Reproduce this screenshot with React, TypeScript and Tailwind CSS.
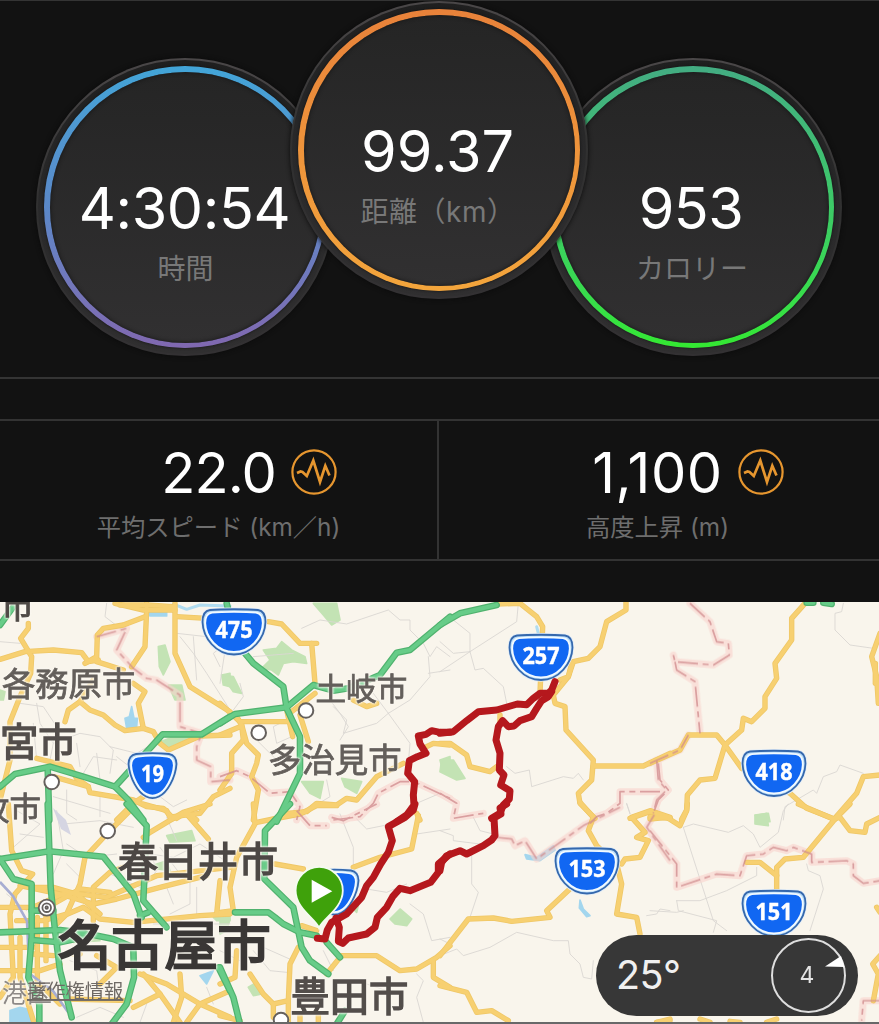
import React from "react";

type Layer = "minor" | "park" | "water" | "river" | "border" | "yellow" | "green" | "route";
type Tile = { x: number; y: number } & Partial<Record<Layer, string[]>>;

// Map geometry, split in tiles. Points are in thirds of a pixel from the tile origin.
const tiles: Tile[] = [
  {
    x: 0,
    y: 600,
    green: ["0,560 45,522 150,500 250,530 345,560 385,600 430,660", "345,560 488,403 605,403 690,350", "143,505 148,660", "0,75 40,20"],
    yellow: [
      "0,178 75,155 160,150 245,158 265,185 295,180",
      "255,190 290,170 292,105 310,85 370,75 435,50",
      "85,70 85,85 62,115 95,170 92,220 60,290 30,365 30,480 0,600",
      "440,10 440,30 435,140 395,200",
      "345,10 430,30 525,30",
      "360,15 440,15 520,20",
      "525,10 525,160 570,260 690,335",
      "530,50 620,55",
      "290,185 370,210",
      "400,250 435,275 415,310 430,385",
      "195,365 205,330 240,305 270,330 310,345 345,375 375,392 430,385 460,395 480,430 505,450 600,408 690,405",
      "240,305 280,240",
      "110,475 210,500 230,535 265,560 270,578 400,600 440,620 490,625 520,655",
      "160,530 265,560",
      "350,660 400,610 430,590",
      "520,650 600,640 640,590 690,565",
      "530,655 560,635 590,660",
    ],
    border: ["290,110 380,85 350,150 400,205 440,235 470,240 540,285 540,380 605,400 590,440 590,480 632,500 632,545 690,540"],
    park: ["475,140 495,135 510,185 490,225 478,200", "505,255 545,255 555,300 525,300", "665,225 690,220 690,260 670,255", "470,430 520,410 570,412 500,442", "0,270 15,275 10,300 0,300"],
    water: ["395,320 402,355 412,355 410,380 380,385 375,355 388,350", "445,35 500,35 500,48 450,48"],
    river: ["520,12 560,28 600,15 690,18"],
    minor: ["320,10 315,50 380,100", "0,125 60,130", "530,100 620,110 690,90", "540,110 580,160 620,220 690,330", "580,110 590,240", "110,310 120,370 160,430 240,400 300,410 340,450 330,520", "230,430 240,500", "330,440 410,460 460,430", "290,460 300,540", "350,470 440,540", "100,370 110,480", "200,570 200,640 230,660", "300,590 300,650", "160,590 330,640", "60,310 130,320 170,380 150,480", "250,520 280,470 350,480", "480,590 520,620 560,600", "690,120 640,160 660,200"],
  },
  {
    x: 220,
    y: 600,
    green: ["0,370 45,342 200,322 280,255 340,272 385,265 480,225 530,158 570,150 690,50", "20,10 30,50 75,160 100,190 190,260 200,325 240,410 240,520 170,665"],
    yellow: [
      "145,65 185,72 240,130 290,130",
      "275,130 285,250",
      "285,280 215,335",
      "240,345 265,425",
      "200,365 60,365 0,310",
      "200,330 218,410",
      "60,380 0,405",
      "50,350 65,375 70,420 35,460 35,520 0,570",
      "65,375 80,430 115,465 110,490 95,530 115,570 100,660",
      "550,490 470,530 410,600 380,595 350,615 290,610 260,635 200,640",
      "400,300 440,320 470,310",
      "620,440 640,430 690,435",
      "590,640 600,660",
    ],
    route: ["690,397 660,397 635,392 618,403 595,408 600,432 618,460 592,470 568,482 563,520 584,545 580,585 582,615 560,645 530,665"],
    border: ["0,530 50,512 90,530 150,580 210,575 240,620 230,660", "340,660 420,650 460,610 475,580 540,545 570,545 582,545 690,595"],
    park: ["280,10 350,10 360,60 335,75 310,45", "130,150 170,145 185,125 215,150 255,170 260,190 220,185 190,190 175,225 155,210 125,205 150,180", "5,225 40,230 65,280 40,275", "660,480 690,470 690,520 665,500", "245,545 310,545 300,595 270,580", "365,535 425,545 410,580 375,560"],
    minor: ["245,85 300,60 380,72 505,30 540,60 570,60 570,90 610,130 630,170 650,140 690,170", "625,170 630,230 570,300 505,340 460,280", "505,340 470,370 370,400 380,360 340,320", "505,340 570,430 565,490", "40,330 70,290 60,250", "100,170 220,160", "200,360 160,380 170,430 215,410", "110,420 190,500", "330,300 360,340 385,380 360,420", "690,210 625,220", "590,610 660,580", "20,120 0,250", "280,620 330,590 320,540"],
  },
  {
    x: 440,
    y: 600,
    green: ["0,75 60,40 170,15"],
    yellow: [
      "170,12 240,10 290,50 308,80 300,280",
      "558,5 558,30 500,65 480,140 445,175 400,185 385,230 340,285 345,310 375,320 378,390 460,480 455,540 415,580 420,610 465,655",
      "460,498 610,498 690,460",
      "0,430 30,430 80,465 90,500 150,515 170,500",
      "180,345 180,365",
      "570,655 630,635 690,655",
      "395,190 385,230 360,240",
    ],
    route: ["0,400 40,395 80,362 115,335 170,330 232,312 260,314 280,295 300,280 325,280 335,270 345,245", "335,275 325,290 305,302 290,325 275,350 240,362 222,378 205,380 188,362 175,380 168,420 180,460 178,510 192,525 182,555 210,572 208,597 190,615 180,640 155,655"],
    border: ["0,580 50,610 40,655 130,640", "655,490 660,540 685,570 655,600 640,640", "660,575 540,575 540,610 500,640 470,650 450,670"],
    park: ["5,480 40,480 75,535 50,540 0,515"],
    river: ["290,80 295,100"],
    minor: ["40,60 90,100 90,155 0,215", "90,155 40,160 0,125", "90,155 105,210 130,205 190,260 200,310", "200,500 225,520 268,510 275,560 370,530 400,535 415,520 430,540", "235,10 230,65 90,155", "560,610 570,640"],
  },
  {
    x: 650,
    y: 600,
    green: ["470,8 490,8", "520,8 545,12"],
    yellow: [
      "465,10 425,55 425,120 375,190 380,235 345,290 345,325 305,365 280,355 275,390 225,435 195,535 150,540 112,585 110,630 95,658",
      "0,490 90,450 115,405 200,405 225,435 275,505 420,580 470,625 555,658",
      "690,525 640,530 620,580 550,660",
      "690,100 665,170 680,230 685,310",
      "676,190 676,250",
      "0,650 60,655",
    ],
    border: ["120,10 180,65 200,125 235,130 238,165 190,195 75,185 70,165", "75,185 80,210 135,245 150,400", "0,490 90,450 115,405", "20,480 25,540 50,570 20,600 10,640"],
    park: ["315,645 355,640 360,665 325,665"],
    minor: ["580,10 575,35 555,40 555,90 600,135 670,145", "400,660 405,620 490,570 500,580 520,530 560,515 570,495 640,520"],
  },
  {
    x: 0,
    y: 804,
    green: [
      "0,165 148,142 310,158 400,270 425,340",
      "143,0 152,250 165,380 180,500 215,640",
      "380,0 440,65 430,290 500,370",
      "0,165 40,225 95,240 95,400 85,520 118,600 118,660",
      "0,385 180,378 240,385 340,405 400,430 402,520 380,600 335,660",
      "95,408 180,415 250,400",
      "420,335 445,325",
      "95,320 160,320",
      "655,490 690,560",
    ],
    yellow: [
      "25,0 35,140 65,200 98,210 45,270 30,330 40,520 0,580",
      "390,20 320,90 255,160 240,240 200,330 170,360",
      "0,310 100,310 200,265 320,280 470,215 560,205 690,190",
      "60,245 180,270 280,300 350,285 480,250 620,215",
      "280,350 280,250 330,205 370,190",
      "90,250 160,250 230,270 300,330",
      "160,300 240,255 330,265",
      "180,340 250,310 300,345 400,355 600,335 690,330",
      "660,230 650,330",
      "430,100 450,85 550,25 630,0",
      "555,25 625,105",
      "430,0 500,20 510,40",
      "0,500 120,500 180,480",
      "0,430 100,430",
      "100,450 160,455",
      "112,340 112,540",
      "138,320 138,470",
      "50,350 130,350 200,330",
      "60,400 60,520 100,650",
      "220,450 240,450",
      "290,455 350,490 300,540",
      "420,510 500,540 600,600 690,640",
      "540,510 545,580 520,655",
      "690,560 600,600 560,655",
      "430,510 480,570 400,610",
      "480,570 540,655",
      "200,585 390,590",
      "120,540 180,600",
    ],
    park: ["500,95 575,80 585,110 510,115", "200,385 270,375 300,410 220,415", "640,340 690,335 690,350 650,350", "440,190 500,170 510,200"],
    water: ["30,620 60,610 95,618 90,655 30,655", "600,515 640,500 620,540"],
    minor: ["170,20 190,140 160,210", "60,90 130,100", "190,60 300,50 400,70", "200,120 260,160 350,150", "330,210 420,250", "500,250 520,300", "570,220 570,300 510,330", "200,180 250,230", "50,20 120,60 40,130", "450,150 520,160 600,120 690,180", "480,130 540,210", "460,360 690,360", "20,270 80,320", "210,470 290,500 300,580", "440,600 420,655", "230,640 300,610 370,640", "590,250 590,330", "500,40 530,110", "620,550 640,600", "450,140 470,200 440,240"],
  },
  {
    x: 220,
    y: 804,
    green: ["210,0 135,80 133,225 220,310 245,430 270,470 325,510", "45,325 145,325 165,340 190,360 240,385 290,395", "320,415 360,460", "350,660 375,620", "0,490 40,580 60,660"],
    yellow: [
      "100,0 105,60 50,160 30,250 40,320 0,325",
      "110,55 160,45 240,30 290,5 350,5",
      "165,180 250,195",
      "400,190 480,160 575,135 595,35",
      "360,455 470,455 540,500 590,495 650,460 690,425",
      "640,470 640,520 690,550",
      "360,460 320,510",
      "235,430 210,480 205,590 160,600 130,570 90,510",
      "205,590 205,655",
      "160,600 160,640",
      "0,540 45,520 50,440",
      "245,365 290,380",
      "0,635 60,650",
      "240,635 240,660",
      "295,635 295,660",
    ],
    route: ["585,0 580,18 555,40 505,68 517,110 505,145 482,180 460,220 440,245 425,280 380,330 335,355 322,378 315,405 292,403", "348,342 358,370 355,412 368,418 385,402 440,390 465,370 472,340 500,310 518,278 540,253 570,260 632,235 655,205 655,180 690,150"],
    border: ["230,20 270,65 320,65", "335,40 370,50 420,25 470,0"],
    park: ["510,345 540,315 575,345 560,365 525,360", "395,310 415,305 410,325", "85,550 110,535 125,570 100,575", "0,330 30,345 20,380 0,390"],
    minor: ["360,30 400,130 400,190", "440,255 500,265 560,240", "570,300 610,330 635,410 690,400", "590,510 610,530 590,580 610,655", "410,45 440,75 540,55", "590,90 690,75", "100,440 150,500 200,505", "130,430 220,470", "310,440 340,500", "440,540 500,560", "0,440 60,470"],
  },
  {
    x: 440,
    y: 804,
    yellow: [
      "420,-5 460,40 445,80 470,125 530,180 545,240 530,330 590,340 600,390",
      "400,245 320,320 330,340 215,352 160,342 85,345 0,455",
      "0,545 80,565 110,625 155,620 205,650",
      "545,180 555,165 600,160 625,110 590,100 615,85 575,40 630,20 690,40",
      "650,655 690,650",
    ],
    route: ["200,0 180,12 183,30 162,42 165,95 155,108 130,125 80,150 60,140 20,155 5,175 0,200"],
    border: ["170,100 215,105 225,125 255,110 290,165 430,65 540,10", "690,170 620,70 650,20"],
    water: ["255,152 290,160 340,125 345,138 300,170 260,165", "420,288 430,315 450,335 440,338 418,312"],
    minor: ["95,150 95,240 115,265 90,340", "0,455 50,435 70,455 150,430 230,385 340,410 385,410 390,450 420,480 430,520 455,525 460,470", "620,335 650,330 660,315 690,320", "0,80 40,95 40,110 120,120", "100,40 120,80 160,90", "0,405 30,420", "560,0 570,30"],
  },
  {
    x: 650,
    y: 804,
    yellow: [
      "112,0 110,20 90,65 50,40 0,45",
      "600,0 555,45 460,160 405,165 380,190 380,255",
      "445,0 550,45 570,40 600,80 645,85 650,60 690,40",
      "290,175 330,175 380,215",
      "690,455 668,480 685,510 670,590",
      "20,655 60,645",
      "150,645 180,655",
      "240,652 270,655",
      "350,655 380,645",
      "680,310 690,325",
    ],
    border: ["0,80 80,180 80,250 200,210 270,215 290,155 340,150 370,130 410,140 430,130 485,150 485,175 590,170 610,180 610,215 640,238 690,230", "690,590 640,590 635,650"],
    park: ["315,35 350,28 355,65 315,60"],
    minor: ["100,70 190,350 230,380", "100,70 130,60 235,85 280,65 310,90 330,130 385,85 400,20 415,0", "80,290 85,320 200,350 190,385", "0,320 80,325 100,320", "80,290 150,290 230,260 320,215 320,190", "470,180 475,200 510,215 520,255 480,380"],
  },
];

function Lines({ layer, color, width, dash, opacity }: { layer: Layer; color: string; width: number; dash?: string; opacity?: number }) {
  return (
    <g fill="none" stroke={color} strokeWidth={width * 3} strokeDasharray={dash} strokeLinejoin="round" strokeLinecap={dash ? "butt" : "round"} opacity={opacity}>
      {tiles.map((t) => (
        <g key={`${t.x}-${t.y}`} transform={`translate(${t.x} ${t.y}) scale(0.33333)`}>
          {(t[layer] ?? []).map((p) => (
            <polyline key={p} points={p} />
          ))}
        </g>
      ))}
    </g>
  );
}

function Areas({ layer, color }: { layer: Layer; color: string }) {
  return (
    <g fill={color} stroke={color} strokeWidth="5" strokeLinejoin="round">
      {tiles.map((t) => (
        <g key={`${t.x}-${t.y}`} transform={`translate(${t.x} ${t.y}) scale(0.33333)`}>
          {(t[layer] ?? []).map((p) => (
            <polygon key={p} points={p} />
          ))}
        </g>
      ))}
    </g>
  );
}

const WIDE = "M9 2 C20 1 46 1 57 2 C62 2.7 64.5 7 64.5 14 C64 30 51 46.5 33 46.5 C15 46.5 2 30 1.5 14 C1.5 7 4 2.7 9 2Z";
const NARROW = "M9 2 C18 1 33 1 42 2 C47 2.7 49.5 7 49.5 12 C48.5 26 40 41 32 44.5 C28 46.5 23 46.5 19 44.5 C11 41 2.5 26 1.5 12 C1.5 7 4 2.7 9 2Z";

function Shield({ x, y, label, narrow }: { x: number; y: number; label?: string; narrow?: boolean }) {
  const d = narrow ? NARROW : WIDE;
  const mid = narrow ? 25.5 : 33;
  return (
    <g transform={`translate(${x} ${y})`}>
      <path d={d} fill="#1167f2" stroke="#e3edf7" strokeWidth="3.4" />
      <path d={d} fill="#b9dcf8" stroke="#3568ad" strokeWidth="1.8" />
      <path d={d} fill="#1167f2" stroke="#f2faff" strokeWidth="2" transform={`translate(${mid} 24) scale(${narrow ? 0.89 : 0.915} 0.885) translate(${-mid} -24)`} />
      {label && (
        <text x={mid} y="30" textAnchor="middle" textLength={narrow ? 23 : 37} lengthAdjust="spacingAndGlyphs" fontSize="23.5" fontWeight="700" fill="#fff" stroke="#fff" strokeWidth="0.4" className="font-['Open_Sans',sans-serif]">
          {label}
        </text>
      )}
    </g>
  );
}

// "w" is the extra stroke that thickens the regular weight of the font.
const places = [
  { t: "市", x: 1, y: 617.5, s: 33, c: "#4f4a46", w: 1 },
  { t: "各務原市", x: 2, y: 696, s: 33.3, c: "#645f5b", w: 0.8 },
  { t: "宮市", x: 0, y: 756, s: 38.3, c: "#534e4b", w: 1.5 },
  { t: "牧市", x: -22, y: 820, s: 31.5, c: "#5f5a57", w: 0.8 },
  { t: "土岐市", x: 315.5, y: 700, s: 30.6, c: "#645f5b", w: 0.8 },
  { t: "多治見市", x: 268, y: 772, s: 33.4, c: "#645f5b", w: 0.8 },
  { t: "春日井市", x: 118, y: 876, s: 40, c: "#4d4845", w: 1.5 },
  { t: "名古屋市", x: 58, y: 965, s: 53.2, c: "#3a3736", w: 2.4 },
  { t: "豊田市", x: 290.5, y: 1011, s: 39.3, c: "#534e4b", w: 1.5 },
  { t: "港区", x: 2, y: 1002, s: 25, c: "#8d8986", w: 0 },
];

const towns = [
  [306, 710.5],
  [258.7, 732.7],
  [51.7, 782],
  [107.7, 831],
  [281, 1020],
];

function RouteMap() {
  return (
    <svg className="block h-[420px] w-full" viewBox="0 602 879 420" preserveAspectRatio="none" role="img" aria-label="map">
      <rect x="0" y="602" width="879" height="422" fill="#f9f5ec" />
      <Areas layer="park" color="#c3e3b4" />
      <Areas layer="water" color="#a3d6ee" />
      <Lines layer="river" color="#b0dcf0" width={3} />
      <Lines layer="minor" color="#dad7d2" width={0.9} />
      <path d="M53 808 L66 820 L71 835 L61 829Z" fill="#d5d5e2" />
      <Lines layer="border" color="#f9d3cd" width={7} opacity={0.6} />
      <Lines layer="yellow" color="#efc767" width={5.4} />
      <Lines layer="yellow" color="#f7d071" width={3.8} />
      <Lines layer="border" color="#cf8a8c" width={1.7} dash="60 14 18 14" opacity={0.75} />
      <path d="M0 882 L13 896 L27 921 L28 944 L30 974 L53 991 L68 1012" fill="none" stroke="#a7add2" strokeWidth="2.6" />
      <Lines layer="green" color="#50b26e" width={6.6} />
      <Lines layer="green" color="#67cc88" width={4.2} />
      {towns.map(([x, y]) => (
        <circle key={x} cx={x} cy={y} r="7.3" fill="#fff" stroke="#65605d" strokeWidth="2" />
      ))}
      <g fill="#fff" stroke="#65605d" strokeWidth="1.8">
        <circle cx="46.7" cy="907.7" r="8" />
        <circle cx="46.7" cy="907.7" r="4.3" />
        <circle cx="46.7" cy="907.7" r="1.2" />
      </g>
      <g className="font-['Noto_Sans_CJK_JP',sans-serif] [filter:drop-shadow(0_0_1px_#fbf8f1)_drop-shadow(0_0_1px_#fbf8f1)]">
        {places.map((p) => (
          <text key={p.t + p.y} x={p.x} y={p.y} fontSize={p.s} fill={p.c} stroke={p.c} strokeWidth={p.w}>
            {p.t}
          </text>
        ))}
      </g>
      <text x="27" y="998" fontSize="19.3" fill="#6f6a65" textDecoration="underline" className="font-['Noto_Sans_CJK_JP',sans-serif]">
        著作権情報
      </text>
      <Shield x={201} y={608} label="475" />
      <Shield x={127} y={752} label="19" narrow />
      <Shield x={508} y={633.5} label="257" />
      <Shield x={741} y={749.5} label="418" />
      <Shield x={554} y={847} label="153" />
      <Shield x={741} y={889.5} label="151" />
      <Shield x={309} y={868.5} narrow />
      <Lines layer="route" color="#b5181d" width={7} />
      <path d="M319 928 C316 919 295.6 909 295.6 890.5 A23.6 23.6 0 0 1 342.8 890.5 C342.8 909 322 919 319 928Z" fill="#3fa10b" stroke="#f4fbf0" strokeWidth="1.8" />
      <path d="M311.7 879.8 V902.8 L332.3 891.3Z" fill="#fff" />
    </svg>
  );
}

function Gauge({ ring, className, value, label, valueClass, labelClass }: { ring: string; className: string; value: string; label: string; valueClass: string; labelClass: string }) {
  return (
    <div className={`size-[298px] shrink-0 rounded-full bg-linear-to-b from-[#4a4748] via-[#303030] to-[#333133] p-[2px] shadow-[0_0_5px_#0a0a0a] ${className}`}>
      <div className="size-full rounded-full bg-linear-to-b from-[#1f1f1f] via-[#29292a] to-[#302f30] p-[6px]">
        <div className={`size-full rounded-full bg-linear-to-b p-[5.5px] shadow-[0_0_3px_#111] ${ring}`}>
          <div className="flex size-full flex-col items-center rounded-full bg-linear-to-b from-[#252525] to-[#313031] pt-[101px] shadow-[inset_0_0_4px_#151515]">
            <div className={`text-[57.5px] leading-[70px] whitespace-nowrap text-white ${valueClass}`}>{value}</div>
            <div className={`mt-[7px] text-[28px] leading-[38px] whitespace-nowrap text-[#787878] ${labelClass}`}>{label}</div>
          </div>
        </div>
      </div>
    </div>
  );
}

function Pulse() {
  return (
    <svg className="size-[46px] shrink-0" viewBox="0 0 46 46" fill="none" stroke="#e6962f">
      <circle cx="23" cy="23" r="21.6" strokeWidth="2.2" />
      <path d="M6 24 L9.5 22.5 L11.5 23 L15.8 27 L22.3 11.5 L29 33 L34.3 16.8 L38.5 26.5" strokeWidth="2.7" strokeLinejoin="miter" />
    </svg>
  );
}

function Stat({ value, label, className, tracking }: { value: string; label: string; className: string; tracking: string }) {
  return (
    <div className={`flex flex-col items-center pt-[17px] ${className}`}>
      <div className="flex items-center gap-[15px] pl-[61px]">
        <div className={`pt-[2px] text-[56px] leading-[66px] text-white ${tracking}`}>{value}</div>
        <Pulse />
      </div>
      <div className="mt-[4px] text-[24.3px] leading-[34px] whitespace-pre text-[#6e6e6e]">{label}</div>
    </div>
  );
}

export default function App() {
  return (
    <main className="flex h-[1024px] w-[879px] flex-col overflow-hidden bg-[#121212] font-['Inter','Noto_Sans_CJK_JP',sans-serif]">
      <section className="flex h-[379px] items-start border-t border-b-2 border-t-[#343434] border-b-[#343434] pl-[36px]">
        <Gauge className="mt-[57px]" ring="from-[#42a5d8] via-[#5a88c8] to-[#8068b0]" value="4:30:54" label="時間" valueClass="pr-px tracking-[-0.4px]" labelClass="pl-px" />
        <Gauge className="relative z-10 -ml-[44px]" ring="from-[#e8823a] to-[#f3a53c]" value="99.37" label="距離（km）" valueClass="pr-[3px]" labelClass="pr-[2px] tracking-[0.5px]" />
        <Gauge className="mt-[57px] -ml-[44px]" ring="from-[#43ac82] to-[#34e831]" value="953" label="カロリー" valueClass="pr-[4px] tracking-[-0.5px]" labelClass="pr-[2px]" />
      </section>
      <section className="mt-[40px] flex h-[142px] shrink-0 border-y-2 border-[#333333]">
        <Stat value="22.0" label="平均スピード (km／h)" className="w-[439px] border-r-2 border-[#333333]" tracking="tracking-[-0.9px]" />
        <Stat value="1,100" label="高度上昇 (m)" className="w-[440px] pr-[3px]" tracking="tracking-[0.6px]" />
      </section>
      <section className="relative mt-[41px] h-[422px] shrink-0 border-b-2 border-[#686868]">
        <RouteMap />
        <div className="absolute right-[21px] bottom-[6px] flex h-[81px] w-[262px] items-center justify-between rounded-full bg-[#373737] pr-[12px] pl-[20px]">
          <span className="text-[39.5px] tracking-[-0.5px] text-[#f0f0f0]">25°</span>
          <div className="relative flex size-[75px] items-center justify-center rounded-full border-[2.5px] border-[#dedede] pr-[3px]">
            <span className="text-[23px] text-[#e4e4e4]">4</span>
            <svg className="absolute top-[16px] right-[-1px] h-[12px] w-[20px]" viewBox="0 0 20 12">
              <path d="M0 10.5 L16 0 L19.5 11Z" fill="#fff" />
            </svg>
          </div>
        </div>
      </section>
    </main>
  );
}
